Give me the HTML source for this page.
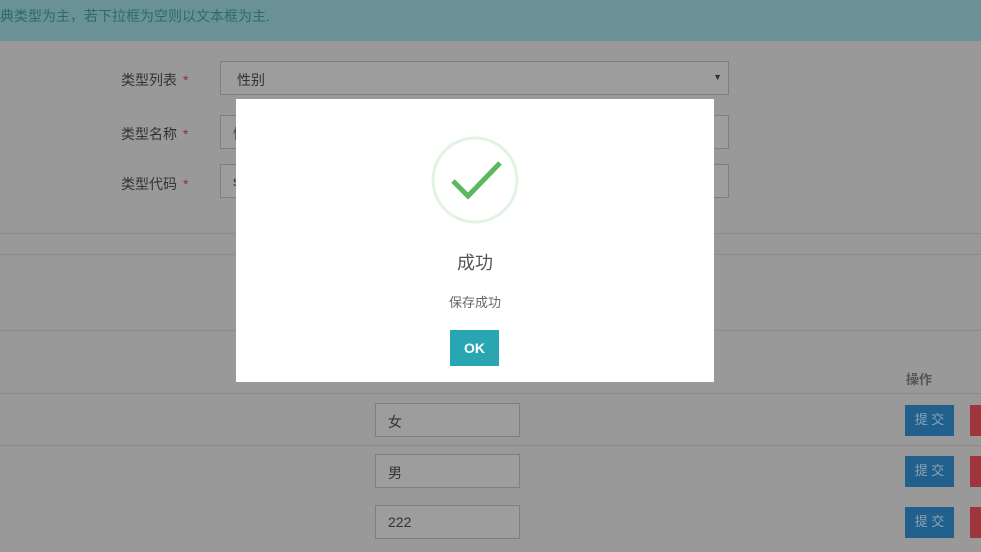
<!DOCTYPE html><html><head><meta charset="utf-8"><style>
*{margin:0;padding:0;box-sizing:border-box}
body{width:981px;height:552px;overflow:hidden;background:#999;font-family:"Liberation Sans","Noto Sans CJK SC",sans-serif;position:relative;font-size:14px;color:#333}
.a{position:absolute}
.hdr{left:0;top:0;width:981px;height:41px;background:#6a9294;color:#2a6b6e;font-size:14px;line-height:32px;padding-left:0}
.lbl{font-size:14px;color:#333}
.lbl i{color:#9a2a30;font-style:normal;margin-left:6px}
.inp{border:1px solid #7f7f7f;background:#9d9d9d}
.ln{left:0;width:981px;height:1px;background:#8c8c8c}
.btn{background:#215f8c;color:#8aa4b8;font-size:13px;text-align:center;line-height:30px;width:49px;height:31px}
.red{background:#a1353c;width:20px;height:31px;left:970px}
.modal{left:236px;top:99px;width:478px;height:283px;background:#fff}
</style></head><body>
<div class="a hdr">典类型为主，若下拉框为空则以文本框为主.</div>
<div class="a lbl" style="left:121px;top:70px">类型列表<i>*</i></div>
<div class="a lbl" style="left:121px;top:124px">类型名称<i>*</i></div>
<div class="a lbl" style="left:121px;top:174px">类型代码<i>*</i></div>
<div class="a inp" style="left:220px;top:61px;width:509px;height:34px;padding:8px 16px">性别<span style="position:absolute;right:6px;top:10px;font-size:9px">▼</span></div>
<div class="a inp" style="left:220px;top:115px;width:509px;height:34px;padding:8px 12px">性</div>
<div class="a inp" style="left:220px;top:164px;width:509px;height:34px;padding:8px 12px">s</div>
<div class="a ln" style="top:233px"></div>
<div class="a ln" style="top:254px"></div>
<div class="a ln" style="top:330px"></div>
<div class="a ln" style="top:393px"></div>
<div class="a ln" style="top:445px"></div>
<div class="a" style="left:906px;top:369px;font-weight:bold;font-size:13px;color:#555">操作</div>
<div class="a inp" style="left:375px;top:403px;width:145px;height:34px;padding:8px 12px">女</div>
<div class="a inp" style="left:375px;top:454px;width:145px;height:34px;padding:8px 12px">男</div>
<div class="a inp" style="left:375px;top:505px;width:145px;height:34px;padding:8px 12px">222</div>
<div class="a btn" style="left:905px;top:405px">提 交</div>
<div class="a btn" style="left:905px;top:456px">提 交</div>
<div class="a btn" style="left:905px;top:507px">提 交</div>
<div class="a red" style="top:405px"></div>
<div class="a red" style="top:456px"></div>
<div class="a red" style="top:507px"></div>
<div class="a modal">
<svg class="a" style="left:194px;top:36px" width="90" height="90"><circle cx="45" cy="45" r="42" fill="none" stroke="#e2f3e3" stroke-width="3"/><path d="M23 46 L38 61 L70 28" fill="none" stroke="#5cb85c" stroke-width="5"/></svg>
<div class="a" style="left:0;width:478px;top:150px;text-align:center;font-size:18px;color:#555">成功</div>
<div class="a" style="left:0;width:478px;top:193px;text-align:center;font-size:13px;color:#666">保存成功</div>
<div class="a" style="left:214px;top:231px;width:49px;height:36px;background:#2aa6b2;color:#fff;font-weight:bold;text-align:center;line-height:36px;font-size:14px">OK</div>
</div>
</body></html>
